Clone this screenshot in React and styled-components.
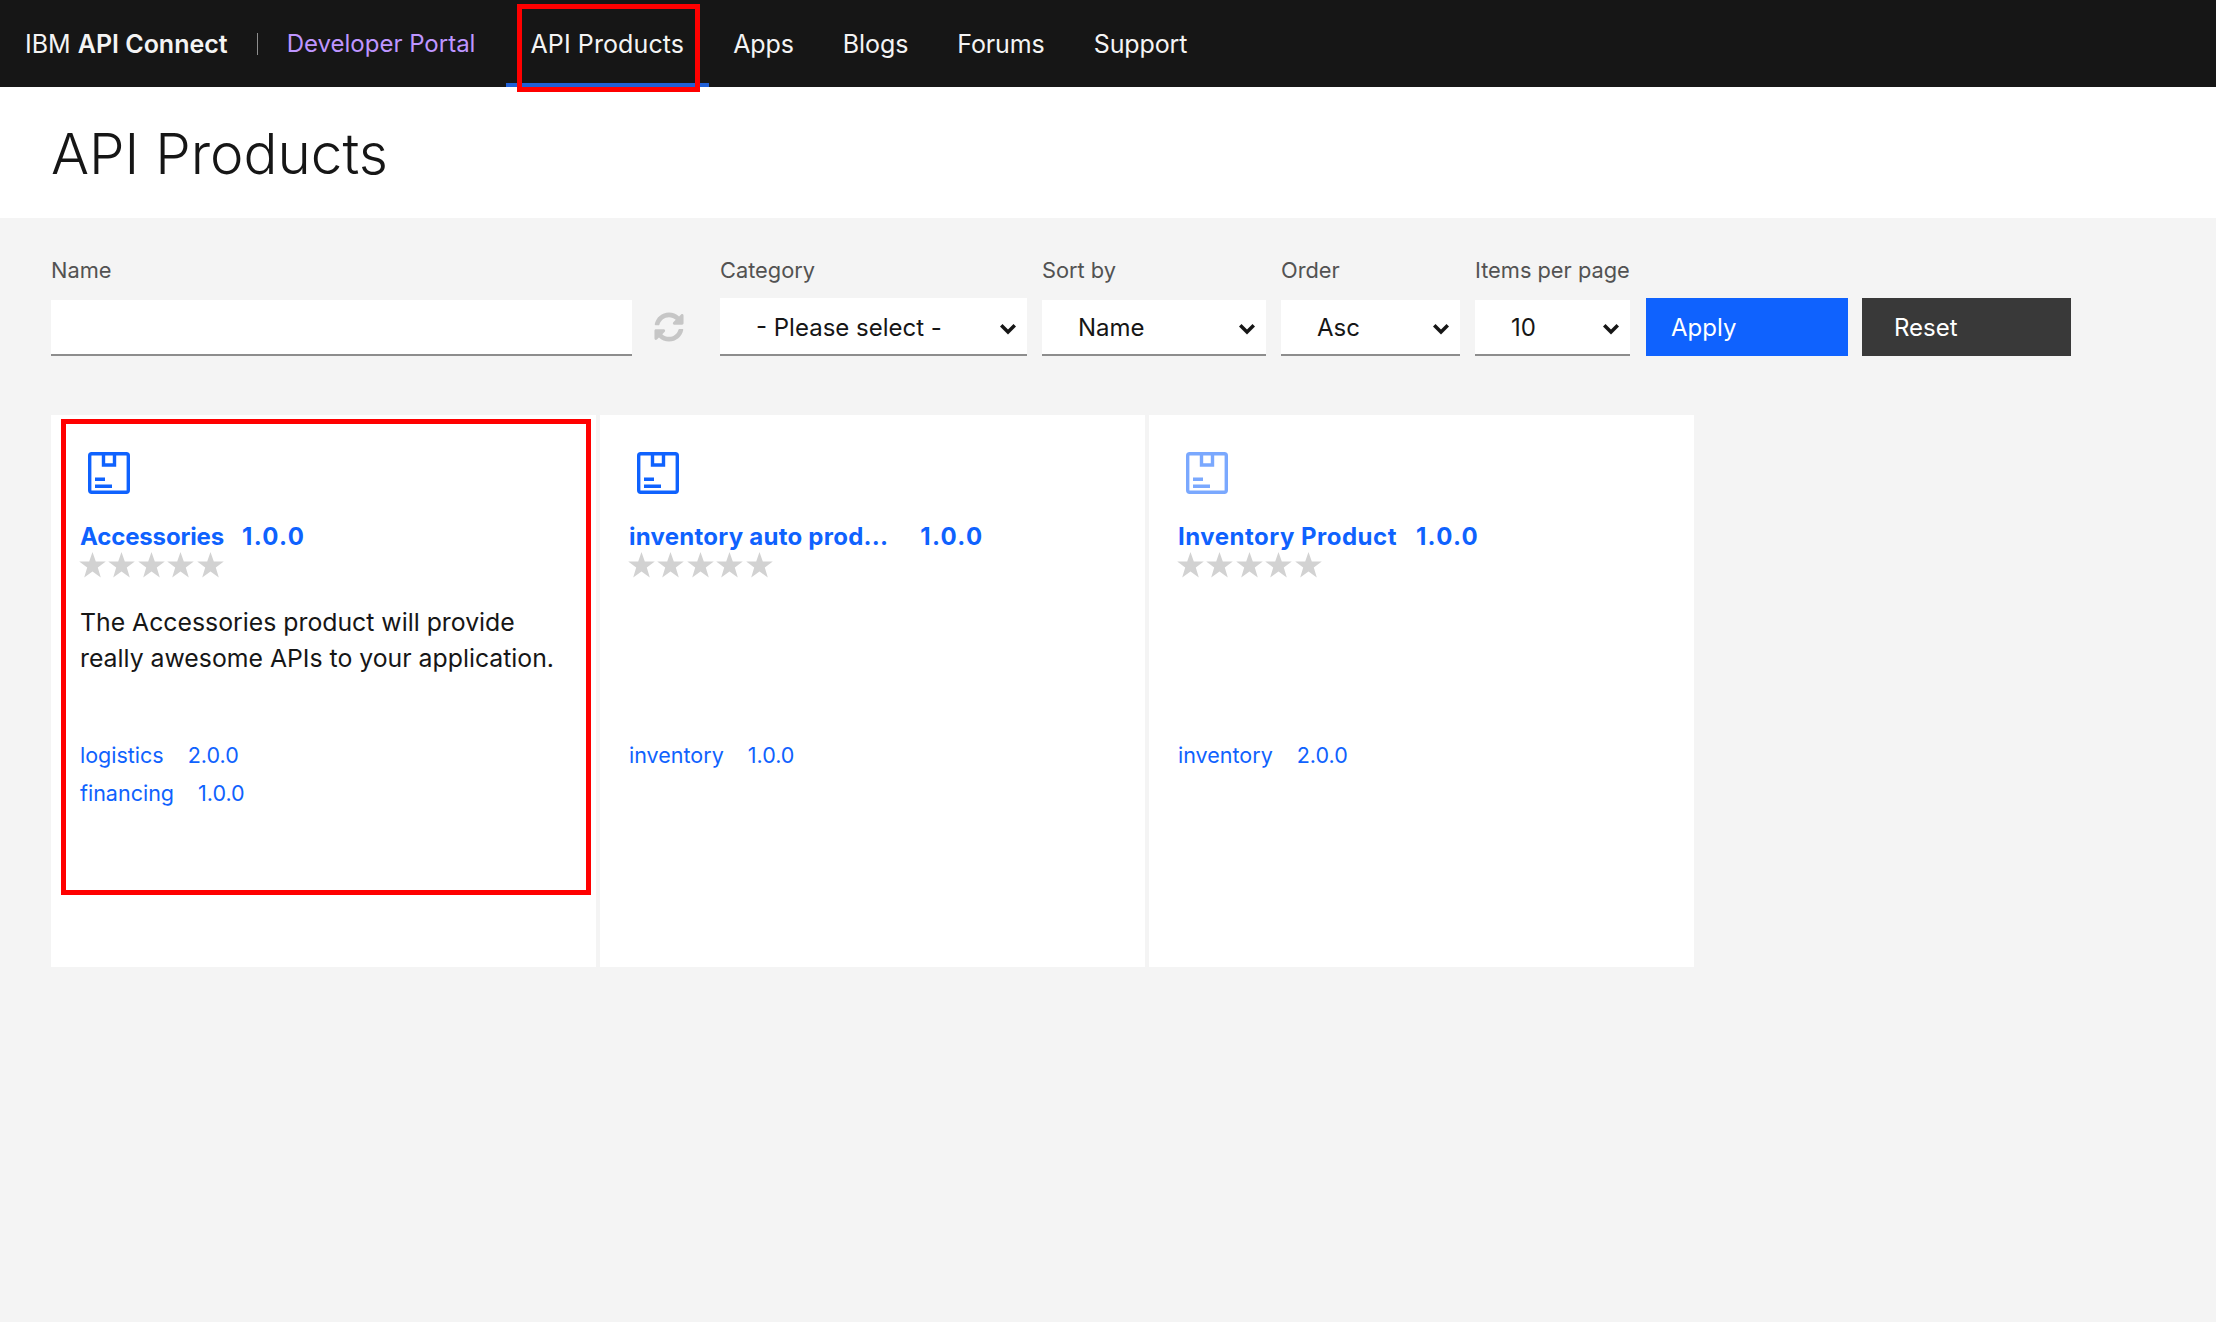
import React from "react";
import styled, { createGlobalStyle } from "styled-components";

const blue = "#0f62fe";
const font = `"Inter", "Roboto", "Liberation Sans", sans-serif`;

const GlobalStyle = createGlobalStyle`
  html, body {
    margin: 0;
    padding: 0;
    background: #f4f4f4;
    font-family: ${font};
  }
  * {
    box-sizing: border-box;
  }
`;

const Page = styled.div`
  position: relative;
  width: 2216px;
  height: 1322px;
  overflow: hidden;
  background: #f4f4f4;
`;

const Header = styled.header`
  display: flex;
  align-items: stretch;
  height: 87px;
  padding-left: 25px;
  background: #161616;
  color: #f4f4f4;
  font-size: 25px;
`;

const Brand = styled.div`
  display: flex;
  align-items: center;
  width: 481px;
  height: 87px;
  font-weight: 400;
  white-space: nowrap;

  b {
    font-weight: 600;
  }
`;

const BrandSep = styled.span`
  width: 1px;
  height: 22px;
  margin: 0 29px 0 29px;
  background: #8d8d8d;
`;

const PortalName = styled.span`
  font-size: 24px;
  color: #be95ff;
`;

const NavItem = styled.a`
  display: flex;
  align-items: center;
  padding: 0 24.5px;
  border-bottom: 4px solid ${(p) => (p.$active ? "#1f5fd6" : "transparent")};
  border-top: 4px solid transparent;
  color: #f4f4f4;
  letter-spacing: ${(p) => (p.$active ? 0.1 : -0.1)}px;
  white-space: nowrap;
`;

const TitleBand = styled.div`
  display: flex;
  align-items: center;
  height: 131px;
  padding: 2px 0 0 51px;
  background: #fff;
`;

const Title = styled.h1`
  margin: 0;
  font-size: 56.5px;
  font-weight: 300;
  color: #161616;
`;

const Filters = styled.form`
  display: flex;
  align-items: flex-end;
  height: 138px;
  padding: 0 0 0 51px;
`;

const Field = styled.label`
  display: flex;
  flex-direction: column;
  justify-content: space-between;
  width: ${(p) => p.$w}px;
  height: 99px;
  margin-right: ${(p) => p.$gap}px;
`;

const FieldLabel = styled.span`
  font-size: 21.8px;
  line-height: 26px;
  color: #525252;
`;

const TextInput = styled.input`
  height: 56px;
  border: 0;
  border-bottom: 2px solid #8d8d8d;
  background: #fff;
  outline: 0;
`;

const SelectWrap = styled.div`
  position: relative;
  height: ${(p) => (p.$tall ? 58 : 56)}px;
`;

const Select = styled.select`
  width: 100%;
  height: 100%;
  padding: ${(p) => (p.$tall ? 2 : 0)}px 0 0 36px;
  border: 0;
  border-bottom: 2px solid #8d8d8d;
  border-radius: 0;
  background: #fff;
  appearance: none;
  font-family: ${font};
  font-size: 24px;
  color: #161616;
`;

const Chevron = styled.svg`
  position: absolute;
  bottom: 21px;
  right: 10px;
  width: 18px;
  height: 12px;
  pointer-events: none;
`;

const RefreshIcon = styled.svg`
  display: block;
  width: 30px;
  height: 30px;
  margin: 0 36px 14px 22px;
  color: #c6c6c6;
`;

const ActionButton = styled.button`
  width: ${(p) => p.$w}px;
  height: 58px;
  margin-right: 14px;
  padding: 0 0 0 ${(p) => p.$pad}px;
  border: 0;
  background: ${(p) => p.$bg};
  color: #fff;
  font-family: ${font};
  font-size: 24px;
  text-align: left;
`;

const Cards = styled.section`
  display: flex;
  gap: 4px;
  padding: 59px 0 0 51px;
`;

const Card = styled.article`
  display: flex;
  flex-direction: column;
  width: 545px;
  height: 552px;
  padding: 37px 0 0 29px;
  background: #fff;
`;

const ProductIcon = styled.svg`
  display: block;
  width: 42px;
  height: 42px;
  margin-left: 8px;
  color: ${blue};
  opacity: ${(p) => (p.$faded ? 0.55 : 1)};
`;

const CardTitle = styled.h2`
  display: flex;
  gap: ${(p) => p.$gap}px;
  margin: 27px 0 0;
  font-size: 24px;
  line-height: 32px;
  font-weight: 700;
  color: ${blue};
  white-space: nowrap;
`;

const TitleName = styled.span`
  letter-spacing: ${(p) => p.$track}px;
`;

const TitleVersion = styled.span`
  letter-spacing: 1.3px;
`;

const Stars = styled.div`
  display: flex;
  height: 25px;
  margin: 0 0 0 -1px;
  color: #d2d2d2;
`;

const Star = styled.svg`
  width: 29.4px;
  height: 26px;
  margin-top: -1px;
`;

const Description = styled.p`
  width: 490px;
  height: 132px;
  margin: 26px 0 0;
  font-size: 24.8px;
  line-height: 36px;
  color: #161616;
`;

const PlanRow = styled.div`
  display: flex;
  gap: 24px;
  height: 38px;
  font-size: 21.5px;
  line-height: 38px;
  color: ${blue};
`;

const RedBox = styled.div`
  position: absolute;
  left: ${(p) => p.$x}px;
  top: ${(p) => p.$y}px;
  width: ${(p) => p.$w}px;
  height: ${(p) => p.$h}px;
  border: 5px solid #ff0000;
  pointer-events: none;
`;

const navItems = ["Apps", "Blogs", "Forums", "Support"];

const products = [
  {
    name: "Accessories",
    version: "1.0.0",
    gap: 18,
    track: -0.15,
    description:
      "The Accessories product will provide really awesome APIs to your application.",
    plans: [
      ["logistics", "2.0.0"],
      ["financing", "1.0.0"],
    ],
  },
  {
    name: "inventory auto prod...",
    version: "1.0.0",
    gap: 32,
    track: 0.25,
    plans: [["inventory", "1.0.0"]],
  },
  {
    name: "Inventory Product",
    version: "1.0.0",
    gap: 19,
    track: 0.5,
    faded: true,
    plans: [["inventory", "2.0.0"]],
  },
];

const selects = [
  { label: "Category", value: "- Please select -", w: 307, gap: 15, tall: true },
  { label: "Sort by", value: "Name", w: 224, gap: 15 },
  { label: "Order", value: "Asc", w: 179, gap: 15 },
  { label: "Items per page", value: "10", w: 155, gap: 16 },
];

const DropArrow = () => (
  <Chevron viewBox="0 0 18 12">
    <path d="M1 3.5 3.5 1 9 6.5 14.5 1 17 3.5 9 11.5Z" fill="#161616" />
  </Chevron>
);

const BoxIcon = ({ faded }) => (
  <ProductIcon viewBox="0 0 42 42" $faded={faded}>
    <g fill="none" stroke="currentColor" strokeWidth="3.4">
      <rect x="1.7" y="1.7" width="38.6" height="38.6" rx="2" />
      <path d="M15.5 2v11h11V2" />
    </g>
    <path d="M7 25.5h10v3.4H7zM7 32.5h17v3.4H7z" fill="currentColor" />
  </ProductIcon>
);

const StarGlyph = () => (
  <Star viewBox="0 0 29.4 26">
    <path
      d="M13.5 0l3.3 9.4h10l-8 6 3 10-8.3-6-8.3 6 3-10-8-6h10z"
      fill="currentColor"
    />
  </Star>
);

const App = () => {
  return (
    <Page>
      <GlobalStyle />
      <Header>
        <Brand>
          <span>
            IBM <b>API Connect</b>
          </span>
          <BrandSep />
          <PortalName>Developer Portal</PortalName>
        </Brand>
        <NavItem $active>API Products</NavItem>
        {navItems.map((item) => (
          <NavItem key={item}>{item}</NavItem>
        ))}
      </Header>
      <TitleBand>
        <Title>API Products</Title>
      </TitleBand>
      <Filters>
        <Field $w={581} $gap={0}>
          <FieldLabel>Name</FieldLabel>
          <TextInput />
        </Field>
        <RefreshIcon viewBox="0 0 512 512">
          <path
            fill="currentColor"
            d="M370.72 133.28C339.458 104.008 298.888 87.962 255.848 88c-77.458.068-144.328 53.178-162.791 126.85-1.344 5.363-6.122 9.15-11.651 9.15H24.103c-7.498 0-13.194-6.807-11.807-14.176C33.933 94.924 134.813 8 256 8c66.448 0 126.791 26.136 171.315 68.685L463.03 40.97C478.149 25.851 504 36.559 504 57.941V192c0 13.255-10.745 24-24 24H345.941c-21.382 0-32.09-25.851-16.971-40.971l41.75-41.749zM32 296h134.059c21.382 0 32.09 25.851 16.971 40.971l-41.75 41.75c31.262 29.273 71.835 45.319 114.876 45.28 77.418-.07 144.315-53.144 162.787-126.849 1.344-5.363 6.122-9.15 11.651-9.15h57.304c7.498 0 13.194 6.807 11.807 14.176C478.067 417.076 377.187 504 256 504c-66.448 0-126.791-26.136-171.315-68.685L48.97 471.03C33.851 486.149 8 475.441 8 454.059V320c0-13.255 10.745-24 24-24z"
          />
        </RefreshIcon>
        {selects.map((item) => (
          <Field key={item.label} as="div" $w={item.w} $gap={item.gap}>
            <FieldLabel>{item.label}</FieldLabel>
            <SelectWrap $tall={item.tall}>
              <Select
                aria-label={item.label}
                defaultValue={item.value}
                $tall={item.tall}
              >
                <option>{item.value}</option>
              </Select>
              <DropArrow />
            </SelectWrap>
          </Field>
        ))}
        <ActionButton type="button" $w={202} $pad={25} $bg={blue}>
          Apply
        </ActionButton>
        <ActionButton type="button" $w={209} $pad={32} $bg="#393939">
          Reset
        </ActionButton>
      </Filters>
      <Cards>
        {products.map((product) => (
          <Card key={product.name}>
            <BoxIcon faded={product.faded} />
            <CardTitle $gap={product.gap}>
              <TitleName $track={product.track}>{product.name}</TitleName>
              <TitleVersion>{product.version}</TitleVersion>
            </CardTitle>
            <Stars>
              {[0, 1, 2, 3, 4].map((n) => (
                <StarGlyph key={n} />
              ))}
            </Stars>
            <Description>{product.description}</Description>
            {product.plans.map(([plan, version]) => (
              <PlanRow key={plan}>
                <span>{plan}</span>
                <span>{version}</span>
              </PlanRow>
            ))}
          </Card>
        ))}
      </Cards>
      <RedBox $x={517} $y={4} $w={183} $h={88} />
      <RedBox $x={61} $y={419} $w={530} $h={476} />
    </Page>
  );
};

export default App;
